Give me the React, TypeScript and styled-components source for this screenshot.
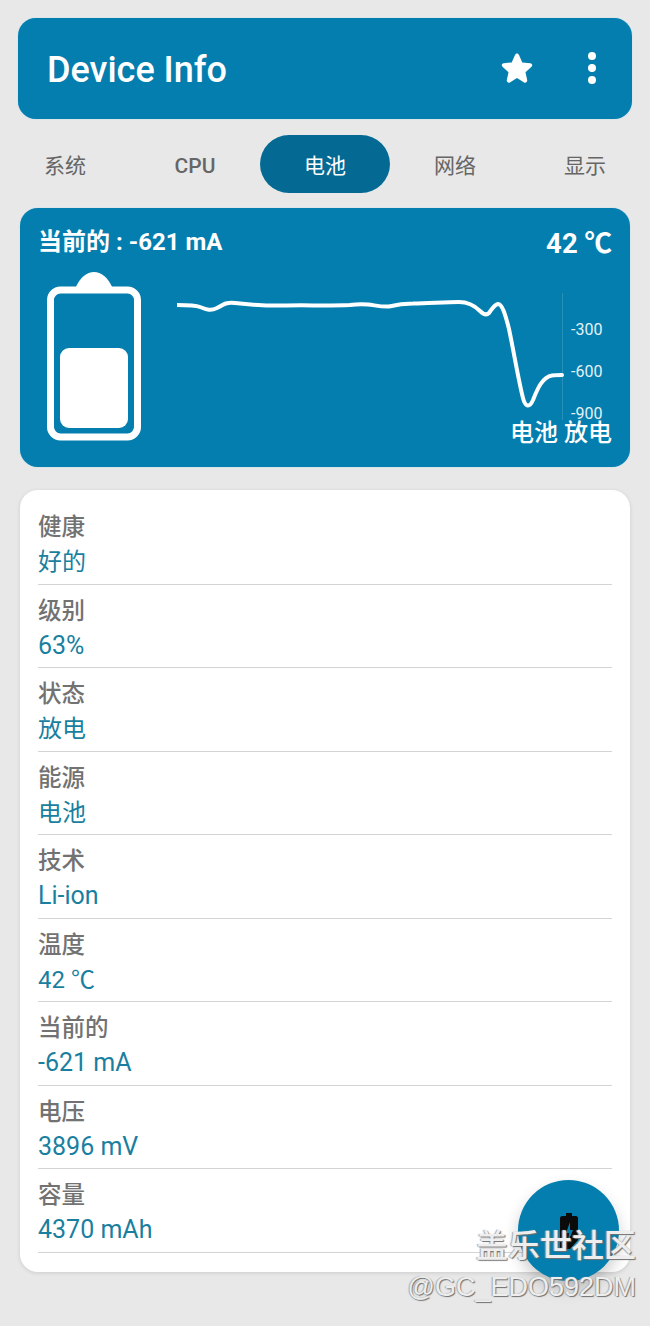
import styled, { createGlobalStyle } from "styled-components";

const CJK = `Roboto, "Noto Sans CJK SC", sans-serif`;

const tabs = ["系统", "CPU", "电池", "网络", "显示"];

const rows = [
  { label: "健康", value: "好的", latin: false },
  { label: "级别", value: "63%", latin: true },
  { label: "状态", value: "放电", latin: false },
  { label: "能源", value: "电池", latin: false },
  { label: "技术", value: "Li-ion", latin: true },
  { label: "温度", value: "42 ℃", latin: false },
  { label: "当前的", value: "-621 mA", latin: true },
  { label: "电压", value: "3896 mV", latin: true },
  { label: "容量", value: "4370 mAh", latin: true },
];

function App() {
  return (
    <Page>
      <GlobalStyle />
      <Toolbar>
        <Title>Device Info</Title>
        <ToolbarIcons>
          <svg width="34" height="34" viewBox="0 0 34 34" fill="#fff">
            <path d="M17 2.500c1 0 1.600.6 2 1.500l3.300 7.400 8 .8c1.900.2 2.600 2.400 1.200 3.600l-6 5.400 1.700 7.900c.4 1.800-1.600 3.200-3.100 2.300L17 27l-7.100 4.400c-1.500.9-3.500-.5-3.100-2.300l1.700-7.900-6-5.400c-1.400-1.200-.7-3.400 1.200-3.600l8-.8L15 4c.4-.9 1-1.500 2-1.500z" />
          </svg>
          <Dots>
            <Dot />
            <Dot />
            <Dot />
          </Dots>
        </ToolbarIcons>
      </Toolbar>

      <TabBar>
        {tabs.map((tab) => (
          <Tab key={tab} $active={tab === "电池"} $latin={tab === "CPU"}>
            {tab}
          </Tab>
        ))}
      </TabBar>

      <BatteryCard>
        <CardHead>
          <Current>当前的 : -621 mA</Current>
          <Temp>42 ℃</Temp>
        </CardHead>
        <CardBody>
          <svg width="94" height="170" viewBox="0 0 94 170">
            <path d="M28 18C33 6 40 1 47 1s14 5 19 17z" fill="#fff" />
            <rect x="3.500" y="19" width="87" height="147" rx="10" fill="none" stroke="#fff" strokeWidth="7" />
            <rect x="13" y="77" width="68" height="80" rx="9" fill="#fff" />
          </svg>
          <ChartWrap>
            <svg width="440" height="150" viewBox="0 0 440 150">
              <line x1="385.500" y1="0" x2="385.500" y2="127" stroke="#fff" strokeOpacity="0.14" />
              <path
                d="M0 12 C12 12 18 12 23 14 C30 17 34 18 40 15 C47 11 50 9 58 10 C75 12 90 13 110 12.500 C130 12 150 13 173 12 C180 11 186 11 191 11.500 C197 12 204 14 212 13.500 C218 12 226 10.500 236 10.500 C255 10 270 9 282 9 C292 9 298 13 303 18 C306 21 309 23 312 20 C315 16 317 12 321 11 C325 11 328 20 332 36 C337 60 342 90 346 105 C348 113 352 116 356 107 C360 97 365 84 375 82.500 C378 82 381 82 385 82"
                fill="none"
                stroke="#fff"
                strokeWidth="4"
                strokeLinecap="round"
              />
            </svg>
            <AxisLabels>
              <span>-300</span>
              <span>-600</span>
              <span>-900</span>
            </AxisLabels>
            <ChartStatus>电池 放电</ChartStatus>
          </ChartWrap>
        </CardBody>
      </BatteryCard>

      <InfoCard>
        {rows.map((row) => (
          <InfoRow key={row.label}>
            <Label>{row.label}</Label>
            <Value $latin={row.latin}>{row.value}</Value>
          </InfoRow>
        ))}
      </InfoCard>

      <Fab>
        <svg width="18" height="36" viewBox="0 0 18 36">
          <path d="M6 0h6v3h4c1 0 2 1 2 2v22l-8 9H2c-1 0-2-1-2-2V5c0-1 1-2 2-2h4z" fill="#0b0b0b" />
          <path d="M10 9l-4 11h3l-1 9 5-12h-3z" fill="#047eae" />
        </svg>
      </Fab>

      <Watermark>
        <WatermarkTitle>盖乐世社区</WatermarkTitle>
        <WatermarkId>@GC_EDO592DM</WatermarkId>
      </Watermark>
    </Page>
  );
}

export default App;

const GlobalStyle = createGlobalStyle`
  html, body {
    margin: 0;
    padding: 0;
    background: #e8e8e8;
  }
`;

const Page = styled.div`
  position: relative;
  width: 650px;
  height: 1326px;
  overflow: hidden;
  box-sizing: border-box;
  padding-top: 18px;
  font-family: ${CJK};
  background: #e8e8e8;
`;

const Toolbar = styled.header`
  display: flex;
  align-items: center;
  justify-content: space-between;
  height: 101px;
  margin: 0 18px;
  padding: 0 36px 0 29px;
  box-sizing: border-box;
  border-radius: 18px;
  background: #047eae;
  box-shadow: 0 0 1px #7cc6e4;
`;

const Title = styled.h1`
  margin: 3px 0 0;
  font-size: 36px;
  font-weight: 500;
  color: #fff;
`;

const ToolbarIcons = styled.div`
  display: flex;
  align-items: center;
  gap: 54px;
  margin-top: -2px;
`;

const Dots = styled.div`
  display: flex;
  flex-direction: column;
  gap: 4px;
`;

const Dot = styled.span`
  width: 8px;
  height: 8px;
  border-radius: 50%;
  background: #fff;
`;

const TabBar = styled.nav`
  display: grid;
  grid-template-columns: repeat(5, 130px);
  height: 58px;
  margin-top: 16px;
`;

const Tab = styled.div<{ $active: boolean; $latin: boolean }>`
  display: flex;
  align-items: center;
  justify-content: center;
  box-sizing: border-box;
  padding-top: ${(p) => (p.$latin ? "3px" : "0")};
  border-radius: 29px;
  font-size: 21px;
  font-weight: ${(p) => (p.$latin ? 500 : 400)};
  color: ${(p) => (p.$active ? "#fff" : "#666")};
  background: ${(p) => (p.$active ? "#046a94" : "transparent")};
`;

const BatteryCard = styled.section`
  height: 259px;
  margin: 15px 20px 0;
  padding: 17px 18px 0 19px;
  box-sizing: border-box;
  border-radius: 18px;
  background: #047eae;
  box-shadow: 0 0 1px #7cc6e4;
  color: #fff;
`;

const CardHead = styled.div`
  display: flex;
  align-items: flex-start;
  justify-content: space-between;
`;

const Current = styled.div`
  font-size: 24px;
  font-weight: 700;
  line-height: 34px;
  margin-left: -1px;
`;

const Temp = styled.div`
  font-size: 27.500px;
  font-weight: 700;
  line-height: 38px;
`;

const CardBody = styled.div`
  display: flex;
  align-items: flex-start;
  margin-top: 8px;
  padding-left: 8px;
`;

const ChartWrap = styled.div`
  position: relative;
  width: 435px;
  height: 170px;
  margin: 22px 0 0 36px;
`;

const AxisLabels = styled.div`
  position: absolute;
  top: 26px;
  left: 394px;
  display: flex;
  flex-direction: column;
  gap: 21px;
  font-size: 16px;
  line-height: 21px;
  color: #e3f1f7;
`;

const ChartStatus = styled.div`
  position: absolute;
  top: 124px;
  right: 0;
  font-size: 24px;
  font-weight: 500;
  line-height: 32px;
  white-space: nowrap;
`;

const InfoCard = styled.section`
  height: 782px;
  margin: 23px 20px 0;
  padding: 18px 18px 0;
  box-sizing: border-box;
  border-radius: 18px;
  background: #fff;
  box-shadow: 0 1px 4px rgba(0, 0, 0, 0.12);
`;

const InfoRow = styled.div`
  display: flex;
  flex-direction: column;
  height: 83.500px;
  box-sizing: border-box;
  padding-top: 9px;
  border-bottom: 1px solid #d4d4d4;

  &:first-child {
    height: 76.500px;
    padding-top: 2px;
  }
`;

const Label = styled.div`
  font-size: 23.500px;
  font-weight: 500;
  line-height: 34px;
  color: #727272;
`;

const Value = styled.div<{ $latin: boolean }>`
  font-size: ${(p) => (p.$latin ? "25px" : "24px")};
  line-height: 36px;
  color: #1a7f9f;
`;

const Fab = styled.div`
  position: absolute;
  left: 518px;
  top: 1180px;
  display: flex;
  align-items: center;
  justify-content: center;
  width: 101px;
  height: 101px;
  border-radius: 50%;
  background: #047eae;
  box-shadow: 0 8px 16px rgba(0, 0, 0, 0.2);
`;

const Watermark = styled.div`
  position: absolute;
  right: 14px;
  top: 1226px;
  display: flex;
  flex-direction: column;
  align-items: flex-end;
  gap: 5px;
  font-family: "Liberation Sans", "Noto Sans CJK SC", sans-serif;
  color: #eeeeee;
  text-shadow: 1px 1px 1px #6f6f6f, -1px 0 1px #a8a8a8;
`;

const WatermarkTitle = styled.div`
  font-size: 32px;
  line-height: 40px;
  font-weight: 500;
`;

const WatermarkId = styled.div`
  font-size: 27px;
  line-height: 32px;
`;
